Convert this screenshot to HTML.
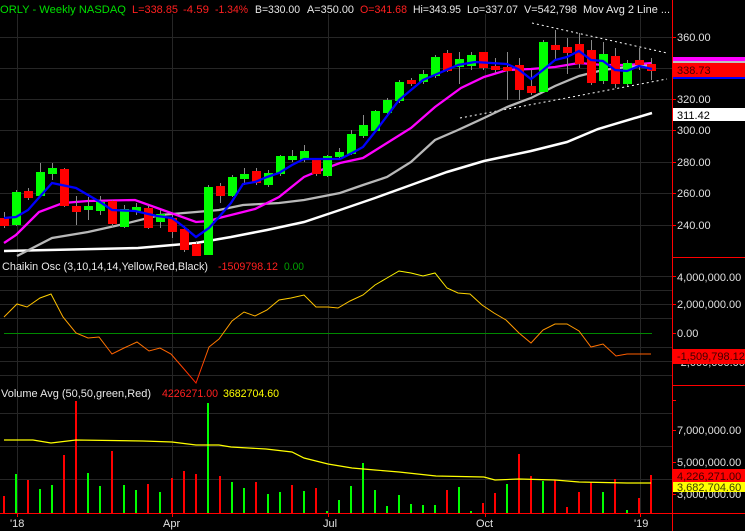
<!DOCTYPE html>
<html><head><meta charset="utf-8"><style>
html,body{margin:0;padding:0;background:#000;}
svg{display:block;}
text{font-family:"Liberation Sans",sans-serif;font-size:11px;}
</style></head><body>
<svg width="745" height="531" viewBox="0 0 745 531" xmlns="http://www.w3.org/2000/svg">
<defs>
<linearGradient id="ch" gradientUnits="userSpaceOnUse" x1="0" y1="270" x2="0" y2="385">
<stop offset="0" stop-color="#ffff00"/><stop offset="0.5" stop-color="#ff9900"/><stop offset="1" stop-color="#ff1a00"/>
</linearGradient>
</defs>
<rect width="745" height="531" fill="#000"/>
<!-- grid -->
<g stroke="#262626" stroke-width="1">
<line x1="17.5" y1="14" x2="17.5" y2="513"/><line x1="172.5" y1="14" x2="172.5" y2="513"/><line x1="328.5" y1="14" x2="328.5" y2="513"/><line x1="485.5" y1="14" x2="485.5" y2="513"/><line x1="640.5" y1="14" x2="640.5" y2="513"/>
<line x1="0" y1="37.5" x2="672" y2="37.5"/><line x1="0" y1="68.5" x2="672" y2="68.5"/><line x1="0" y1="99.5" x2="672" y2="99.5"/><line x1="0" y1="130.5" x2="672" y2="130.5"/><line x1="0" y1="162.5" x2="672" y2="162.5"/><line x1="0" y1="193.5" x2="672" y2="193.5"/><line x1="0" y1="225.5" x2="672" y2="225.5"/>
<line x1="0" y1="276.5" x2="672" y2="276.5"/><line x1="0" y1="290.5" x2="672" y2="290.5"/><line x1="0" y1="304.5" x2="672" y2="304.5"/><line x1="0" y1="318.5" x2="672" y2="318.5"/><line x1="0" y1="347.5" x2="672" y2="347.5"/><line x1="0" y1="361.5" x2="672" y2="361.5"/><line x1="0" y1="375.5" x2="672" y2="375.5"/>
<line x1="0" y1="413.5" x2="672" y2="413.5"/><line x1="0" y1="446.5" x2="672" y2="446.5"/><line x1="0" y1="479.5" x2="672" y2="479.5"/>
</g>
<!-- axis -->
<g stroke="#ff0000" stroke-width="1">
<line x1="672.5" y1="0" x2="672.5" y2="531"/>
<line x1="0" y1="513.5" x2="745" y2="513.5"/>
<line x1="672" y1="257.5" x2="745" y2="257.5"/><line x1="672" y1="385.5" x2="745" y2="385.5"/>
<line x1="672" y1="37.5" x2="676" y2="37.5"/><line x1="672" y1="99.5" x2="676" y2="99.5"/><line x1="672" y1="130.5" x2="676" y2="130.5"/><line x1="672" y1="162.5" x2="676" y2="162.5"/><line x1="672" y1="193.5" x2="676" y2="193.5"/><line x1="672" y1="225.5" x2="676" y2="225.5"/>
<line x1="672" y1="276.5" x2="676" y2="276.5"/><line x1="672" y1="304.5" x2="676" y2="304.5"/><line x1="672" y1="333.5" x2="676" y2="333.5"/><line x1="672" y1="361.5" x2="676" y2="361.5"/>
<line x1="672" y1="400.5" x2="676" y2="400.5"/><line x1="672" y1="430.5" x2="676" y2="430.5"/><line x1="672" y1="462.5" x2="676" y2="462.5"/><line x1="672" y1="494.5" x2="676" y2="494.5"/>
<line x1="17.5" y1="513" x2="17.5" y2="517"/><line x1="172.5" y1="513" x2="172.5" y2="517"/><line x1="328.5" y1="513" x2="328.5" y2="517"/><line x1="485.5" y1="513" x2="485.5" y2="517"/><line x1="640.5" y1="513" x2="640.5" y2="517"/>
</g>
<!-- header -->
<text y="13" x="0" fill="#00e000" textLength="126" lengthAdjust="spacingAndGlyphs">ORLY - Weekly  NASDAQ</text>
<text y="13" x="132" fill="#ff2020" textLength="46" lengthAdjust="spacingAndGlyphs">L=338.85</text>
<text y="13" x="183" fill="#ff2020" textLength="26" lengthAdjust="spacingAndGlyphs">-4.59</text>
<text y="13" x="215" fill="#ff2020" textLength="33" lengthAdjust="spacingAndGlyphs">-1.34%</text>
<text y="13" x="255" fill="#e8e8e8" textLength="45" lengthAdjust="spacingAndGlyphs">B=330.00</text>
<text y="13" x="307" fill="#e8e8e8" textLength="47" lengthAdjust="spacingAndGlyphs">A=350.00</text>
<text y="13" x="360" fill="#ff2020" textLength="47" lengthAdjust="spacingAndGlyphs">O=341.68</text>
<text y="13" x="413" fill="#e8e8e8" textLength="48" lengthAdjust="spacingAndGlyphs">Hi=343.95</text>
<text y="13" x="467" fill="#e8e8e8" textLength="51" lengthAdjust="spacingAndGlyphs">Lo=337.07</text>
<text y="13" x="524" fill="#e8e8e8" textLength="53" lengthAdjust="spacingAndGlyphs">V=542,798</text>
<text y="13" x="583" fill="#e8e8e8" textLength="87" lengthAdjust="spacingAndGlyphs">Mov Avg 2 Line ...</text>
<!-- trend lines -->
<g stroke="#fff" stroke-width="1" stroke-dasharray="2,3">
<line x1="532" y1="23" x2="667" y2="53"/><line x1="460" y1="118" x2="667" y2="79"/>
</g>
<!-- moving averages -->
<polyline fill="none" stroke="#fff" stroke-width="2.5" points="4,251 138,248 196,243 231,237 267,230 304,222 340,210 375,198 411,185 447,172 484,161 531,151 567,142 598,129 652,113"/>
<polyline fill="none" stroke="#b8b8b8" stroke-width="2.3" points="17,256 52,238 88,232 124,224 160,215 196,212 219,210 243,205 279,203 304,200 340,193 363,185 387,177 411,162 435,140 458,130 484,118 507,107 531,98 555,86 579,76 603,70 627,67 652,65"/>
<polyline fill="none" stroke="#ff00ff" stroke-width="2.3" points="4,243 16,235 39,212 63,203 88,201 135,200 160,209 196,222 209,221 219,218 243,212 255,209 279,197 304,177 316,172 340,163 363,158 387,143 411,128 435,107 461,88 484,77 507,70 531,69 555,67 579,63 603,65 627,65 652,63"/>
<!-- candles -->
<g stroke="#8a8a8a" stroke-width="1">
<line x1="4.5" y1="212" x2="4.5" y2="228"/><line x1="16.5" y1="190" x2="16.5" y2="226"/><line x1="28.5" y1="188" x2="28.5" y2="200"/><line x1="40.5" y1="163" x2="40.5" y2="197"/><line x1="52.5" y1="163" x2="52.5" y2="180"/><line x1="64.5" y1="168" x2="64.5" y2="207"/><line x1="76.5" y1="196" x2="76.5" y2="225"/><line x1="88.5" y1="197" x2="88.5" y2="220"/><line x1="100.5" y1="196" x2="100.5" y2="215"/><line x1="112.5" y1="200" x2="112.5" y2="227"/><line x1="124.5" y1="205" x2="124.5" y2="228"/><line x1="136.5" y1="203" x2="136.5" y2="215"/><line x1="148.5" y1="205" x2="148.5" y2="229"/><line x1="160.5" y1="210" x2="160.5" y2="228"/><line x1="172.5" y1="215" x2="172.5" y2="238"/><line x1="184.5" y1="226" x2="184.5" y2="252"/><line x1="196.5" y1="241" x2="196.5" y2="256"/><line x1="208.5" y1="185" x2="208.5" y2="255"/><line x1="220.5" y1="183" x2="220.5" y2="203"/><line x1="232.5" y1="175" x2="232.5" y2="197"/><line x1="244.5" y1="168" x2="244.5" y2="185"/><line x1="256.5" y1="168" x2="256.5" y2="185"/><line x1="268.5" y1="170" x2="268.5" y2="187"/><line x1="280.5" y1="155" x2="280.5" y2="176"/><line x1="292.5" y1="150" x2="292.5" y2="162"/><line x1="304.5" y1="145" x2="304.5" y2="162"/><line x1="316.5" y1="158" x2="316.5" y2="176"/><line x1="327.5" y1="155" x2="327.5" y2="177"/><line x1="339.5" y1="148" x2="339.5" y2="160"/><line x1="351.5" y1="130" x2="351.5" y2="155"/><line x1="363.5" y1="115" x2="363.5" y2="138"/><line x1="375.5" y1="110" x2="375.5" y2="132"/><line x1="387.5" y1="98" x2="387.5" y2="115"/><line x1="399.5" y1="80" x2="399.5" y2="103"/><line x1="411.5" y1="78" x2="411.5" y2="86"/><line x1="423.5" y1="70" x2="423.5" y2="84"/><line x1="435.5" y1="55" x2="435.5" y2="78"/><line x1="447.5" y1="50" x2="447.5" y2="72"/><line x1="459.5" y1="52" x2="459.5" y2="84"/><line x1="471.5" y1="52" x2="471.5" y2="70"/><line x1="483.5" y1="52" x2="483.5" y2="70"/><line x1="495.5" y1="58" x2="495.5" y2="73"/><line x1="507.5" y1="52" x2="507.5" y2="100"/><line x1="519.5" y1="58" x2="519.5" y2="100"/><line x1="531.5" y1="70" x2="531.5" y2="95"/><line x1="543.5" y1="40" x2="543.5" y2="92"/><line x1="555.5" y1="30" x2="555.5" y2="60"/><line x1="567.5" y1="38" x2="567.5" y2="74"/><line x1="579.5" y1="33" x2="579.5" y2="68"/><line x1="591.5" y1="40" x2="591.5" y2="85"/><line x1="603.5" y1="42" x2="603.5" y2="84"/><line x1="615.5" y1="48" x2="615.5" y2="88"/><line x1="627.5" y1="60" x2="627.5" y2="86"/><line x1="639.5" y1="48" x2="639.5" y2="70"/><line x1="651.5" y1="58" x2="651.5" y2="80"/>
</g>
<g fill="#ff0000" stroke="#ff0000" stroke-width="2">
<rect x="1" y="219" width="7" height="6"/><rect x="25" y="192" width="7" height="5"/><rect x="61" y="170" width="7" height="35"/><rect x="73" y="207" width="7" height="4"/><rect x="109" y="202" width="7" height="21"/><rect x="145" y="209" width="7" height="18"/><rect x="169" y="219" width="7" height="12"/><rect x="181" y="230" width="7" height="19"/><rect x="193" y="245" width="7" height="10"/><rect x="217" y="187" width="7" height="8"/><rect x="253" y="172" width="7" height="10"/><rect x="313" y="160" width="7" height="13"/><rect x="408" y="81" width="7" height="2"/><rect x="444" y="54" width="7" height="16"/><rect x="480" y="53" width="7" height="14"/><rect x="492" y="67" width="7" height="2"/><rect x="504" y="68" width="7" height="2"/><rect x="516" y="66" width="7" height="23"/><rect x="528" y="87" width="7" height="5"/><rect x="552" y="46" width="7" height="3"/><rect x="564" y="48" width="7" height="4"/><rect x="576" y="45" width="7" height="18"/><rect x="588" y="51" width="7" height="31"/><rect x="612" y="57" width="7" height="26"/><rect x="636" y="61" width="7" height="3"/><rect x="648" y="65" width="7" height="5"/>
</g>
<g fill="#00ff00" stroke="#00ff00" stroke-width="2">
<rect x="13" y="193" width="7" height="31"/><rect x="37" y="173" width="7" height="22"/><rect x="49" y="169" width="7" height="4"/><rect x="85" y="207" width="7" height="2"/><rect x="97" y="203" width="7" height="7"/><rect x="121" y="210" width="7" height="16"/><rect x="133" y="208" width="7" height="2"/><rect x="157" y="215" width="7" height="6"/><rect x="205" y="188" width="7" height="66"/><rect x="229" y="178" width="7" height="17"/><rect x="241" y="175" width="7" height="3"/><rect x="265" y="174" width="7" height="10"/><rect x="277" y="157" width="7" height="16"/><rect x="289" y="157" width="7" height="2"/><rect x="301" y="152" width="7" height="7"/><rect x="324" y="157" width="7" height="18"/><rect x="336" y="153" width="7" height="3"/><rect x="348" y="135" width="7" height="18"/><rect x="360" y="126" width="7" height="9"/><rect x="372" y="112" width="7" height="18"/><rect x="384" y="101" width="7" height="11"/><rect x="396" y="83" width="7" height="17"/><rect x="420" y="75" width="7" height="6"/><rect x="432" y="58" width="7" height="17"/><rect x="456" y="60" width="7" height="6"/><rect x="468" y="56" width="7" height="9"/><rect x="540" y="43" width="7" height="48"/><rect x="600" y="55" width="7" height="25"/><rect x="624" y="64" width="7" height="19"/>
</g>
<polyline fill="none" stroke="#0000ff" stroke-width="2.3" points="4,218 16,217 28,210 52,183 76,188 100,202 112,210 135,211 157,216 172,218 184,227 196,237 209,228 219,217 231,203 243,184 255,182 267,177 279,173 292,165 304,159 340,159 352,153 363,147 378,128 399,100 423,80 437,74 458,65 475,62 507,64 518,69 531,79 543,70 555,60 567,57 579,51 591,60 603,61 615,70 627,71 639,66 652,69"/>
<!-- price axis labels -->
<g fill="#e0e0e0">
<text x="677" y="41">360.00</text><text x="677" y="103">320.00</text><text x="677" y="134">300.00</text><text x="677" y="166">280.00</text><text x="677" y="197">260.00</text><text x="677" y="229">240.00</text>
</g>
<rect x="673" y="57" width="72" height="4" fill="#ff00ff"/>
<rect x="673" y="61" width="72" height="2" fill="#c0c0c0"/>
<rect x="673" y="63" width="72" height="14" fill="#ff0000"/>
<rect x="673" y="77" width="72" height="2" fill="#0000ff"/>
<text x="677" y="74" fill="#400000">338.73</text>
<rect x="673" y="108" width="72" height="13" fill="#ffffff"/>
<text x="677" y="119" fill="#000">311.42</text>
<!-- chaikin -->
<text x="2" y="270" fill="#e8e8e8" textLength="206" lengthAdjust="spacingAndGlyphs">Chaikin Osc (3,10,14,14,Yellow,Red,Black)</text>
<text x="218" y="270" fill="#ff2020" textLength="60" lengthAdjust="spacingAndGlyphs">-1509798.12</text>
<text x="284" y="270" fill="#00a000" textLength="20" lengthAdjust="spacingAndGlyphs">0.00</text>
<line x1="4" y1="333.5" x2="652" y2="333.5" stroke="#008800" stroke-width="1"/>
<polyline fill="none" stroke="url(#ch)" stroke-width="1" points="4,317 17,304 27,307 40,298 51,294 63,317 76,333 88,338 99,337 112,354 124,348 137,342 149,351 160,348 171,354 184,369 196,383 209,347 219,339 232,321 244,312 255,316 267,310 279,300 291,298 304,295 316,307 328,307 338,308 350,301 363,295 375,285 387,278 399,271 411,273 423,276 435,273 447,288 458,293 470,294 482,305 494,313 506,320 519,333 531,343 543,330 555,324 567,324 579,331 591,347 603,344 616,356 627,354 639,354 651,354"/>
<g fill="#e0e0e0">
<text x="677" y="281">4,000,000.00</text><text x="677" y="308">2,000,000.00</text><text x="677" y="337">0.00</text><text x="677" y="366">-2,000,000.00</text>
</g>
<rect x="673" y="349" width="72" height="15" fill="#ff0000"/>
<text x="677" y="360" fill="#400000">-1,509,798.12</text>
<!-- volume -->
<text x="1" y="397" fill="#e8e8e8" textLength="150" lengthAdjust="spacingAndGlyphs">Volume Avg (50,50,green,Red)</text>
<text x="162" y="397" fill="#ff2020" textLength="56" lengthAdjust="spacingAndGlyphs">4226271.00</text>
<text x="223" y="397" fill="#ffff00" textLength="56" lengthAdjust="spacingAndGlyphs">3682704.60</text>
<g fill="#ff0000">
<rect x="3" y="496" width="2" height="17"/><rect x="27" y="480" width="2" height="33"/><rect x="63" y="455" width="2" height="58"/><rect x="75" y="401" width="2" height="112"/><rect x="111" y="451" width="2" height="62"/><rect x="147" y="484" width="2" height="29"/><rect x="171" y="478" width="2" height="35"/><rect x="183" y="471" width="2" height="42"/><rect x="195" y="474" width="2" height="39"/><rect x="219" y="476" width="2" height="37"/><rect x="255" y="482" width="2" height="31"/><rect x="291" y="485" width="2" height="28"/><rect x="315" y="488" width="2" height="25"/><rect x="446" y="490" width="2" height="23"/><rect x="482" y="503" width="2" height="10"/><rect x="494" y="493" width="2" height="20"/><rect x="518" y="454" width="2" height="59"/><rect x="530" y="476" width="2" height="37"/><rect x="554" y="480" width="2" height="33"/><rect x="566" y="507" width="2" height="6"/><rect x="578" y="492" width="2" height="21"/><rect x="590" y="482" width="2" height="31"/><rect x="614" y="479" width="2" height="34"/><rect x="638" y="498" width="2" height="15"/><rect x="650" y="475" width="2" height="38"/>
</g>
<g fill="#00ff00">
<rect x="15" y="474" width="2" height="39"/><rect x="39" y="489" width="2" height="24"/><rect x="51" y="485" width="2" height="28"/><rect x="87" y="473" width="2" height="40"/><rect x="99" y="486" width="2" height="27"/><rect x="123" y="485" width="2" height="28"/><rect x="135" y="490" width="2" height="23"/><rect x="159" y="492" width="2" height="21"/><rect x="207" y="403" width="2" height="110"/><rect x="231" y="482" width="2" height="31"/><rect x="243" y="488" width="2" height="25"/><rect x="267" y="494" width="2" height="19"/><rect x="279" y="492" width="2" height="21"/><rect x="303" y="491" width="2" height="22"/><rect x="326" y="511" width="2" height="2"/><rect x="338" y="500" width="2" height="13"/><rect x="350" y="486" width="2" height="27"/><rect x="362" y="463" width="2" height="50"/><rect x="374" y="490" width="2" height="23"/><rect x="386" y="506" width="2" height="7"/><rect x="398" y="495" width="2" height="18"/><rect x="410" y="504" width="2" height="9"/><rect x="422" y="505" width="2" height="8"/><rect x="434" y="505" width="2" height="8"/><rect x="458" y="487" width="2" height="26"/><rect x="470" y="511" width="2" height="2"/><rect x="506" y="484" width="2" height="29"/><rect x="542" y="481" width="2" height="32"/><rect x="602" y="492" width="2" height="21"/><rect x="626" y="510" width="2" height="3"/>
</g>
<polyline fill="none" stroke="#ffff00" stroke-width="1.2" points="4,440 33,440 51,443 76,440 143,441 172,442 196,445 219,445 231,447 266,449 292,452 304,458 328,464 352,468 375,470 399,472 436,476 484,477 495,480 519,479 555,480 579,482 627,483 651,483"/>
<g fill="#e0e0e0">
<text x="677" y="434">7,000,000.00</text><text x="677" y="466">5,000,000.00</text><text x="677" y="498">3,000,000.00</text>
</g>
<rect x="673" y="469" width="72" height="13" fill="#ff0000"/>
<text x="677" y="480" fill="#400000">4,226,271.00</text>
<rect x="673" y="482" width="72" height="10" fill="#ffff00"/>
<text x="677" y="491" fill="#404000">3,682,704.60</text>
<!-- dates -->
<g fill="#e0e0e0">
<text x="10" y="527">'18</text><text x="163" y="527">Apr</text><text x="323" y="527">Jul</text><text x="476" y="527">Oct</text><text x="634" y="527">'19</text>
</g>
</svg>
</body></html>
